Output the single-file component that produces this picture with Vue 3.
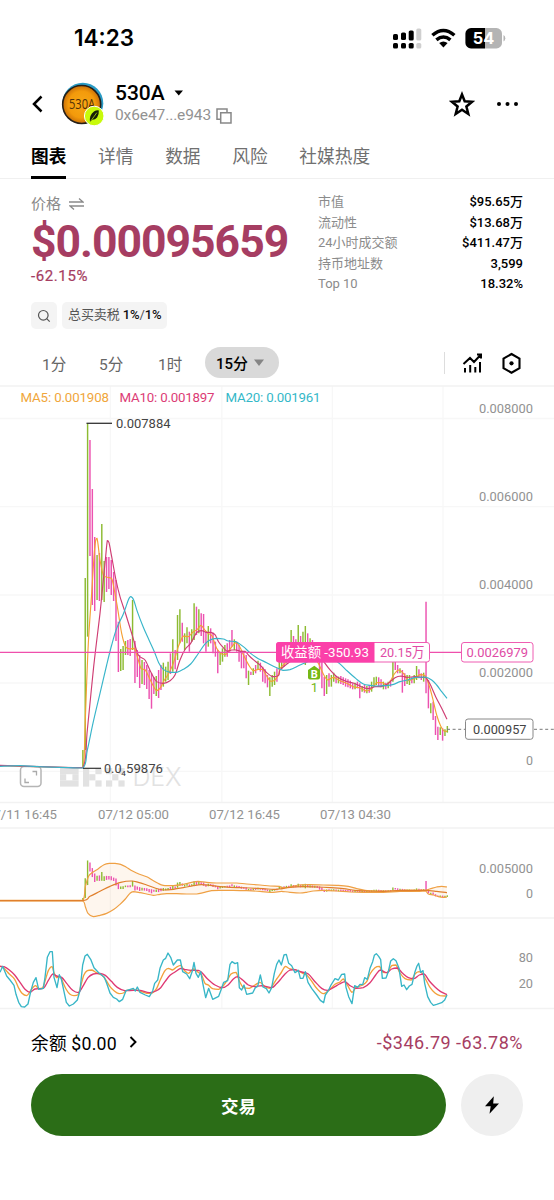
<script setup>
const tabs = ['图表', '详情', '数据', '风险', '社媒热度']
const stats = [
  ['市值', '$95.65万'],
  ['流动性', '$13.68万'],
  ['24小时成交额', '$411.47万'],
  ['持币地址数', '3,599'],
  ['Top 10', '18.32%'],
]

// Candles: high, low, direction (g = up, p = down), one every 15 minutes
const parse = (s, oy) => s.trim().split(/\s+/).map((t) => {
  const [h, l, c] = t.split(',')
  return { h: oy + h / 3, l: oy + l / 3, c }
})
const rows = [
  ...parse(`450,500,g -66,450,g -531,110,g -480,-132,p -333,15,p -189,33,p -135,0,g -141,3,p -228,0,g -117,6,g
    -129,-24,p -129,-33,p -120,-15,p -84,3,p -60,123,p 65,216,p 147,213,g 138,210,g 123,165,g 120,165,p
    117,168,p 0,150,g 123,249,p 150,231,p 165,264,p 180,252,g 186,255,p 195,267,p 210,297,p 219,326,p
    231,282,p 228,288,g 210,294,p 195,270,p 188,260,g 200,245,g 185,240,g 160,222,p 118,215,g 150,208,p
    45,180,g 28,130,g 68,125,p 100,150,g 82,130,g 95,155,p 88,125,g 10,120,g 20,105,p 28,100,g 40,108,p
    42,130,p 95,155,p 78,140,g 85,130,p 98,160,p 125,170,p 150,220,p 158,195,g 145,185,g 135,170,g
    130,170,p 120,155,p 90,140,p 118,150,g 125,155,p 135,185,p 150,205,p 160,205,p 165,235,p 212,255,g
    215,225,p 205,225,g 195,220,p 182,210,g 188,215,p 200,245,p 208,250,p 225,262,p 232,288,g 225,260,g
    215,255,g 205,245,p`, 600),
  ...parse(`190,240,g 180,235,g 170,230,p 160,220,g 160,215,p 120,200,g 138,200,p 148,200,p 105,190,g
    138,200,p 125,195,g 108,225,g 130,200,p 145,205,g 150,205,p 160,210,g 165,215,p 175,260,p 205,295,p
    260,318,p 255,312,g 250,290,p 255,290,g 248,275,g 258,280,p 260,280,g 258,282,p 262,285,p 265,290,p
    268,292,p 272,295,p 280,298,p 278,298,g 275,295,p 280,325,p 288,305,g 285,308,p 288,310,g 285,308,p
    275,305,g 262,290,g 260,285,g 262,288,p 268,292,p 275,298,g 278,298,p 275,295,g 270,290,p 205,275,g
    215,240,p 225,250,p 235,250,g 240,308,p 250,288,p 255,282,g 255,285,g 262,280,p 255,280,g 228,270,g
    238,265,p 250,270,p 248,275,g 35,310,p 270,355,p 340,370,g 335,390,p 378,435,p 410,450,p 412,435,g
    415,452,p 418,438,g 408,428,g`, 590),
]
const candles = rows.map((r, i) => ({ ...r, x: (248.6 + 7.1 * i) / 3 }))
const mini = candles.map((k) => {
  const y = (v) => 900.5 - (771 - v) * 0.115
  const h = y(k.h), l = y(k.l)
  return { x: k.x, c: k.c, h, l: k.x < 89 ? l : Math.max(h + 1.6, Math.min(l, h + 9)) }
})

// Sample points are stored at three units per pixel
const at = (s, ox, oy) => {
  const n = s.trim().split(/[\s,]+/).map(Number)
  const p = []
  for (let i = 0; i < n.length; i += 2) p.push([ox + n[i] / 3, oy + n[i + 1] / 3])
  return p
}
const f = (v) => v.toFixed(2)
const line = (p) => 'M' + p.map((q) => f(q[0]) + ' ' + f(q[1])).join('L')
// Control points stay inside each segment's box, so steep moves never overshoot
const within = (v, a, b) => f(Math.max(Math.min(a, b), Math.min(Math.max(a, b), v)))
const curve = (p) => {
  let d = `M${f(p[0][0])} ${f(p[0][1])}`
  for (let i = 0; i < p.length - 1; i++) {
    const a = p[i - 1] || p[i], b = p[i], c = p[i + 1], e = p[i + 2] || c
    const c1 = [0, 1].map((j) => within(b[j] + (c[j] - a[j]) / 6, b[j], c[j]))
    const c2 = [0, 1].map((j) => within(c[j] - (e[j] - b[j]) / 6, b[j], c[j]))
    d += `C${c1.join(' ')} ${c2.join(' ')} ${f(c[0])} ${f(c[1])}`
  }
  return d
}

const ma5 = curve([
  ...at('0,497 60,499 246,503 252,480 257,330 265,130 275,-20 284,-155 291,-185 300,-120 310,-75 322,-68 335,-64 342,-35 352,20 365,100 377,140 390,147 403,145 412,170 423,205 436,210 447,232 458,254 470,272 482,262 492,242 505,222 520,190 535,140 550,108 565,110 578,97 592,88 603,76 613,88 624,100 636,108 650,145 665,162 678,163 692,145 708,128 720,142 733,170 748,198 760,212 775,208 788,208 800,228 812,244 825,240 836,222', 0, 600),
  ...at('30,235 45,220 70,190 100,185 130,200 146,222 160,252 173,270 190,262 210,272 230,280 250,290 270,294 290,303 305,296 320,278 337,278 350,285 360,275 373,252 386,240 400,250 415,272 435,265 450,254 466,258 477,285 488,325 500,375 512,408 522,423 531,424', 270, 590),
])
const ma10 = curve([
  ...at('0,496 90,499 248,503 262,390 281,200 300,40 308,-40 316,-120 322,-178 327,-172 335,-130 348,-60 360,-10 378,45 398,110 415,165 435,180 452,215 470,245 490,250 510,242 525,225 540,180 556,147 572,130 590,98 605,92 618,97 632,97 645,104 656,126 670,143 682,154 695,150 708,150 722,154 735,154 748,168 765,183 782,197 800,218 818,230 836,226', 0, 600),
  ...at('30,240 60,215 90,195 120,185 145,190 165,220 182,242 203,262 228,274 252,280 274,290 295,296 315,290 333,290 352,282 375,263 393,258 412,262 435,260 452,262 466,262 480,282 497,320 515,355 531,388', 270, 590),
])
const ma20 = curve([
  ...at('0,499 60,497 110,500 180,502 248,504 262,450 280,365 300,280 320,195 335,135 350,85 370,42 385,0 392,-10 401,0 412,35 430,82 447,120 463,155 476,188 490,208 510,217 530,217 550,208 572,192 594,162 614,133 630,120 650,115 670,117 685,123 708,125 730,140 752,160 775,176 800,188 820,199 838,206', 0, 600),
  ...at('40,241 60,239 90,225 120,212 155,200 185,205 208,220 232,243 258,266 280,282 300,286 320,288 345,287 368,284 390,275 413,270 437,262 466,261 485,270 500,285 515,305 531,325', 270, 590),
])

const bollTop = [
  ...at('0,226 248,226 256,185 266,153 278,142 295,131 312,119 328,115 345,115 362,118 378,126 393,136 410,144 425,150 442,156 458,166 474,175 490,181 520,182 550,178 572,173 594,169 620,172 650,174 680,174 710,174 740,177 780,180 810,183 838,184', 0, 825),
  ...at('35,188 60,186 85,180 120,179 160,180 205,181 235,184 260,191 285,196 320,198 360,198 400,195 440,195 466,196 485,190 500,186 515,184 531,186', 270, 825),
]
const bollMid = curve([
  ...at('0,227 248,227 270,214 300,199 330,184 362,172 394,168 415,172 440,180 465,189 490,195 520,193 550,188 580,182 605,179 630,181 660,185 690,187 720,188 750,189 790,191 820,193 838,192', 0, 825),
  ...at('38,191 60,187 100,185 140,186 180,188 220,191 255,196 290,198 340,199 380,197 420,197 466,196 500,199 531,203', 270, 825),
])
const bollLow = [
  ...at('0,228 248,228 256,245 264,265 280,275 300,271 320,265 342,253 360,238 376,222 390,205 400,200 420,203 440,207 460,211 480,208 500,206 530,206 560,207 590,207 610,203 635,197 665,196 700,196 740,197 780,199 810,202 838,200', 0, 825),
  ...at('35,199 60,202 90,204 110,202 130,198 160,196 200,198 240,201 280,202 340,202 390,199 440,199 466,198 475,207 490,210 505,215 520,217 531,216', 270, 825),
]
const bollBand = curve(bollTop) + curve([...bollLow].reverse()).replace('M', 'L') + 'Z'

const kLine = curve([
  ...at('0,423 12,430 28,447 44,463 55,487 66,505 80,512 90,500 98,488 107,482 116,491 128,488 136,465 145,437 156,425 162,443 170,458 180,455 188,470 198,492 210,508 222,512 235,508 243,480 252,449 262,437 276,435 288,443 305,450 317,464 330,485 343,498 357,506 370,504 380,496 400,495 420,498 440,505 457,504 470,490 482,462 495,437 505,430 518,435 530,426 542,421 552,435 565,445 580,432 595,442 605,450 615,475 625,480 638,491 656,493 670,482 682,465 693,447 708,442 718,468 730,488 748,490 765,480 780,472 795,485 810,490 820,478 830,462', 0, 825),
  ...at('33,444 46,424 58,431 72,433 85,438 100,446 110,450 124,467 140,490 160,506 180,493 195,478 210,471 220,462 232,480 246,502 258,488 278,480 290,470 300,447 315,428 328,424 339,442 352,443 365,422 378,420 390,444 405,461 424,465 435,447 447,440 457,445 468,465 480,487 495,504 510,512 531,513', 270, 825),
])
const dLine = curve([
  ...at('0,424 12,425 28,435 44,450 60,472 75,493 90,502 105,492 130,490 145,466 158,447 170,453 185,457 200,475 218,496 235,503 248,485 264,458 280,447 300,445 316,451 334,469 352,487 374,497 400,496 420,496 448,503 468,498 482,488 495,470 510,451 525,441 542,430 558,434 575,436 595,436 606,443 622,461 645,480 668,488 685,479 700,462 713,455 728,465 745,480 765,485 785,482 815,488 828,478', 0, 825),
  ...at('30,465 45,447 60,435 75,434 95,441 115,447 135,470 155,490 172,496 190,488 208,477 225,470 240,482 258,490 280,488 300,473 317,450 331,435 350,443 365,432 382,429 398,445 415,458 432,461 448,450 463,447 478,468 495,486 512,500 531,509', 270, 825),
])
const jLine = line([
  ...at('0,442 8,424 20,453 30,465 42,481 48,508 56,532 64,545 74,546 84,537 92,500 100,472 108,458 116,493 130,490 135,457 142,397 150,380 157,380 162,457 171,488 178,449 184,462 192,500 199,532 208,543 220,537 232,525 240,497 248,420 255,393 262,388 272,403 282,428 296,443 313,457 320,475 330,504 340,517 350,522 358,530 368,523 378,497 391,493 400,490 406,498 412,486 420,502 436,510 448,515 458,498 464,475 473,465 480,430 490,405 497,400 504,384 512,397 520,420 532,405 541,405 548,440 560,447 569,461 577,438 582,412 588,445 595,457 602,440 609,478 617,518 626,490 638,523 656,514 663,495 671,472 683,467 690,418 696,410 705,416 713,413 718,488 725,495 732,480 740,508 758,504 766,488 773,484 781,450 789,486 799,491 807,504 815,488 823,445 830,418 837,405', 0, 825),
  ...at('34,420 42,390 49,388 56,415 65,422 75,443 85,436 91,460 99,460 106,440 114,472 125,490 140,510 151,526 161,533 166,510 175,497 183,480 195,461 205,465 215,448 224,447 228,487 236,515 246,536 254,482 263,487 270,478 278,479 284,458 292,463 300,430 308,410 313,391 319,386 326,394 332,404 337,460 348,459 355,440 362,408 370,401 378,407 387,430 395,484 402,480 410,494 418,483 426,478 435,440 441,423 446,415 452,442 459,437 464,475 473,515 482,532 490,541 500,538 515,533 524,525 531,510', 270, 825),
])

const axis = [
  [413, '0.008000', 54], [501, '0.006000', 54], [589, '0.004000', 54], [677.4, '0.002000', 54],
  [765.4, '0', 7], [873, '0.005000', 54], [898.4, '0', 7], [962, '80', 14.3], [987.5, '20', 14.3],
]
const dates = [[-14, '07/11 16:45'], [98, '07/12 05:00'], [209, '07/12 16:45'], [320, '07/13 04:30']]
const blocks = [
  [60, 768, 18.6, 6.2], [60, 780.4, 18.6, 6.2], [60, 774.2, 6.2, 6.2], [72.4, 774.2, 6.2, 6.2],
  [83, 768, 6.2, 18.6], [89.2, 774.2, 6.2, 6.2], [95.4, 768, 6.2, 6.2], [95.4, 780.4, 6.2, 6.2],
  [106, 768, 6.2, 6.2], [118.4, 768, 6.2, 6.2], [112.2, 774.2, 6.2, 6.2], [106, 780.4, 6.2, 6.2], [118.4, 780.4, 6.2, 6.2],
]
</script>

<template>
  <main class="screen">
    <div class="status">
      <span class="clock">14:23</span>
      <svg class="status-icons" width="116" height="24" viewBox="391 26 116 24">
        <g fill="#000">
          <rect x="393" y="35" width="5" height="6" rx="1.6" /><rect x="401" y="33.5" width="5" height="7.5" rx="1.6" /><rect x="408.7" y="31.5" width="5" height="10" rx="1.6" />
          <rect x="393" y="44" width="5" height="5.5" rx="1.6" /><rect x="401" y="44" width="5" height="5.5" rx="1.6" /><rect x="408.7" y="44" width="5" height="5.5" rx="1.6" />
        </g>
        <g fill="#cfcfcf"><rect x="416.3" y="29.5" width="5" height="12" rx="1.6" /><rect x="416.3" y="44" width="5" height="5.5" rx="1.6" /></g>
        <g fill="none" stroke="#000" stroke-width="3.5"><path d="M432.4 36.3q11-9.6 22 0" /><path d="M436.4 40.9q7-5.9 14 0" /></g>
        <path d="M439.2 44.1q4.2-3.2 8.4 0l-4.2 4.3z" />
        <path d="M471 29h14v20.5h-14a5.6 5.6 0 0 1-5.6-5.6v-9.3a5.6 5.6 0 0 1 5.6-5.6z" />
        <path d="M485 29h11.400a5.600 5.600 0 0 1 5.600 5.600v9.300a5.600 5.600 0 0 1-5.600 5.600h-11.400z" fill="#b4b4b4" />
        <path d="M503.500 36q1.800.8 1.800 3.200t-1.800 3.200z" fill="#b4b4b4" />
        <text x="472.700" y="45" class="battery" textLength="21.500" lengthAdjust="spacingAndGlyphs">54</text>
      </svg>
    </div>

    <header class="header">
      <svg class="back" width="13" height="20" viewBox="0 0 13 20"><path d="M10.500 2.500 3 10l7.500 7.500" fill="none" stroke="#000" stroke-width="2.500" /></svg>
      <svg class="avatar" width="44" height="44" viewBox="61 82 44 44">
        <defs><radialGradient id="coin"><stop offset="0" stop-color="#f7a817" /><stop offset=".7" stop-color="#f39a0b" /><stop offset="1" stop-color="#ca7009" /></radialGradient></defs>
        <circle cx="82.800" cy="103.300" r="20.500" fill="#299bc5" />
        <circle cx="81.700" cy="104.500" r="19" fill="url(#coin)" stroke="#261f18" stroke-width="1.600" />
        <text x="69" y="108.800" class="coin-text" textLength="26" lengthAdjust="spacingAndGlyphs">530A</text>
        <circle cx="94.200" cy="116" r="9.800" fill="#c8fa0a" stroke="#fff" stroke-width="1" />
        <path d="M90 122q-1-7 4-10.500 2-1.300 4.800-1.100.4 3.500-1.700 7.100-2 2.200-4.500 2.200z" fill="#171e08" />
        <path d="m90.300 121.700 6.500-9" stroke="#c8fa0a" stroke-width=".7" />
      </svg>
      <div class="identity">
        <div class="name"><span>530A</span><svg width="10" height="6"><path d="M.5.500h8.500L4.750 5.500z" /></svg></div>
        <div class="address"><span>0x6e47...e943</span>
          <svg width="16" height="16" viewBox="0 0 16 16" fill="none" stroke="#888" stroke-width="1.500"><path d="M4.500 11.200H1V1h10v3.300M4.700 4.700H15V15H4.700z" /></svg>
        </div>
      </div>
      <svg class="star" width="26" height="27" viewBox="0 0 26 27"><path d="m13 3.500 2.700 6.800 7.300.500-5.600 4.700 1.900 7.500-6.300-4.200L6.700 23l1.900-7.500L3 10.800l7.300-.5z" fill="none" stroke="#000" stroke-width="2.500" /></svg>
      <svg class="more" width="24" height="6"><circle cx="3" cy="3" r="2" /><circle cx="11.500" cy="3" r="2" /><circle cx="20" cy="3" r="2" /></svg>
    </header>

    <nav class="tabs"><span v-for="(t, i) in tabs" :key="t" :class="{ active: i === 0 }">{{ t }}</span></nav>

    <section class="summary">
      <div class="price-side">
        <div class="price-label">价格
          <svg width="15" height="12" viewBox="0 0 15 12" fill="none" stroke="#8a8a8a" stroke-width="1.300"><path d="M0 4h14L10 .5M15 8H1l4 3.500" /></svg>
        </div>
        <div class="price">$0.00095659</div>
        <div class="change">-62.15%</div>
        <div class="chips">
          <span class="chip search"><svg width="14" height="14" viewBox="0 0 14 14" fill="none" stroke="#555" stroke-width="1.200"><circle cx="6.300" cy="6.300" r="4.800" /><path d="m9.700 9.700 3 3" /></svg></span>
          <span class="chip tax">总买卖税 <b>1%</b>/<b>1%</b></span>
        </div>
      </div>
      <dl class="stats"><div v-for="s in stats" :key="s[0]"><dt>{{ s[0] }}</dt><dd>{{ s[1] }}</dd></div></dl>
    </section>

    <div class="periods">
      <span class="p1">1分</span><span class="p2">5分</span><span class="p3">1时</span>
      <span class="period-on">15分<svg width="11" height="8"><path d="M0 .5h10L5 7z" fill="#858585" /></svg></span>
      <i class="divider"></i>
      <svg class="tool" width="20" height="22" viewBox="463 353 20 22" fill="none" stroke="#000" stroke-width="2"><path d="m464.500 365 6.500-6 4 4 6.500-7M478 355.500h4v4M466 369v4.500M471.200 366v7.500M476.300 368v5.500M481 363v10.500" /></svg>
      <svg class="tool hex" width="20" height="22" viewBox="501 353 20 22"><path d="m511.500 355 8 4.600v9.500l-8 4.600-8-4.600v-9.500z" fill="none" stroke="#000" stroke-width="2.100" /><circle cx="511.500" cy="364.300" r="2.100" /></svg>
    </div>

    <svg class="chart" width="554" height="625" viewBox="0 385 554 625">
      <g fill="none" stroke="#f7f7f7" stroke-width="1.300">
        <path d="M0 418.500H554M0 506.700H554M0 595H554M0 683H554M0 771.300H554" />
        <path d="M110.400 386V802M221.800 386V802M332.400 386V802M443 386V802M110.400 828V1008M221.800 828V1008M332.400 828V1008M443 828V1008" />
      </g>
      <path d="M0 386H554M0 802.500H554M0 828H554M0 918H554M0 1008.500H554" stroke="#f2f2f2" stroke-width="1.400" />

      <g fill="#e2e2e2"><rect v-for="(b, i) in blocks" :key="i" :x="b[0]" :y="b[1]" :width="b[2]" :height="b[3]" /></g>
      <text x="132.500" y="785.500" class="dex" textLength="49">DEX</text>
      <rect x="20.500" y="766.500" width="20.500" height="20" rx="3.500" fill="#fff" stroke="#b5b5b5" stroke-width="1.500" />
      <path d="M32.500 771.500h4v4M25 778.500v4h4" fill="none" stroke="#aaa" stroke-width="1.300" />

      <path v-for="(k, i) in candles" :key="i" :d="`M${k.x} ${k.h}V${k.l}`" :class="k.c" />
      <g fill="none" stroke-width="1.150">
        <path :d="ma5" stroke="#f5a034" /><path :d="ma10" stroke="#cf3d73" /><path :d="ma20" stroke="#38b5ca" />
      </g>

      <path d="M0 652.300H461" stroke="#ef4fac" stroke-width="1.300" />
      <path d="M447 729.300H466M534 729.300H554" stroke="#777" stroke-dasharray="3 2.600" />
      <path d="M86.500 423.300H112" stroke="#333" stroke-width="1.300" /><path d="M83 768.300H101" stroke="#333" stroke-width="1.200" />

      <g class="ma-labels">
        <text x="20.500" y="402" textLength="88.500" fill="#f0a63b">MA5: 0.001908</text>
        <text x="119.500" y="402" textLength="95" fill="#dc3c76">MA10: 0.001897</text>
        <text x="225.500" y="402" textLength="95" fill="#34b8c8">MA20: 0.001961</text>
      </g>
      <text x="116" y="428" class="mark" textLength="54.500" lengthAdjust="spacingAndGlyphs">0.007884</text>
      <text x="104" y="773" class="mark" textLength="17.500" lengthAdjust="spacingAndGlyphs">0.0</text><text x="121.300" y="775.500" class="sub">4</text>
      <text x="126" y="773" class="mark" textLength="37" lengthAdjust="spacingAndGlyphs">59876</text>

      <g class="axis">
        <text v-for="a in axis" :key="a[0]" :x="533 - a[2]" :y="a[0]" :textLength="a[2]" lengthAdjust="spacingAndGlyphs">{{ a[1] }}</text>
        <text v-for="d in dates" :key="d[1] + d[0]" :x="d[0]" y="818.800" textLength="71" lengthAdjust="spacingAndGlyphs">{{ d[1] }}</text>
      </g>

      <rect x="276.500" y="642.500" width="153" height="19.500" rx="2.500" fill="#fff" stroke="#ef5db2" />
      <path d="M279 642h95.500v20.500H279a3 3 0 0 1-3-3v-14.500a3 3 0 0 1 3-3z" fill="#fb40a9" />
      <text x="281" y="657" class="tag white" textLength="88" lengthAdjust="spacingAndGlyphs">收益额 -350.93</text>
      <text x="380" y="657" class="tag pink" textLength="44.500" lengthAdjust="spacingAndGlyphs">20.15万</text>
      <rect x="461.500" y="642.500" width="71.500" height="19.500" rx="2.500" fill="#fff" stroke="#ef5db2" />
      <text x="466.500" y="657" class="tag pink" textLength="61.500" lengthAdjust="spacingAndGlyphs">0.0026979</text>
      <rect x="465.500" y="719" width="67.500" height="20.300" rx="2.500" fill="#fff" stroke="#888" />
      <text x="473" y="734" class="mark" textLength="53.500" lengthAdjust="spacingAndGlyphs">0.000957</text>
      <path d="m314.300 665.800 5.700 4.200v7.500a2 2 0 0 1-2 2h-8a2 2 0 0 1-2-2V670z" fill="#76b816" />
      <text x="310.700" y="677.500" class="buy">B</text><text x="310.800" y="691.800" class="count">1</text>

      <path :d="bollBand" fill="#f28c28" fill-opacity=".08" />
      <path v-for="(k, i) in mini" :key="'m' + i" :d="`M${k.x} ${k.h}V${k.l}`" :class="['mini', k.c]" />
      <g fill="none" stroke="#efa044" stroke-width="1.200"><path :d="curve(bollTop)" /><path :d="curve(bollLow)" /><path :d="bollMid" stroke="#e07f2c" /></g>
      <g fill="none" stroke-width="1.350" stroke-linejoin="round"><path :d="kLine" stroke="#f3a03b" /><path :d="dLine" stroke="#df3973" /><path :d="jLine" stroke="#38b6c7" /></g>
    </svg>

    <div class="balance">
      <span class="funds">余额 $0.00</span>
      <svg width="9" height="12" viewBox="0 0 9 12"><path d="m1.500 1 5 5-5 5" fill="none" stroke="#000" stroke-width="1.900" /></svg>
      <span class="pnl">-$346.79 -63.78%</span>
    </div>
    <div class="actions">
      <button class="trade">交易</button>
      <button class="flash"><svg width="16" height="18" viewBox="0 0 16 18"><path d="M9.800.2 1 10.300h5.700L5.500 17.800 15 7.500H9.200z" /></svg></button>
    </div>
  </main>
</template>

<style>
body { background: #fff; }
</style>

<style scoped>
* { box-sizing: border-box; }
.screen { width: 554px; height: 1200px; overflow: hidden; background: #fff; color: #000; font-family: Roboto, "Noto Sans CJK SC", sans-serif; }
svg { display: block; flex: none; }
.status { height: 75px; display: flex; justify-content: space-between; align-items: flex-start; padding: 25px 47px 0 74px; }
.clock { font: 600 22.500px/25px Inter, sans-serif; letter-spacing: 0; }
.battery { font: 700 16.500px Inter, sans-serif; fill: #fff; }
.header { height: 58px; display: flex; align-items: center; padding: 0 34px 0 31px; }
.avatar { margin-left: 17px; }
.identity { margin-left: 10px; margin-top: -1px; flex: 1; }
.name { display: flex; align-items: center; gap: 9px; font-weight: 500; font-size: 21px; line-height: 24px; }
.address { display: flex; align-items: center; gap: 5px; color: #929292; font-size: 15.500px; line-height: 21px; }
.address span { width: 96px; white-space: nowrap; letter-spacing: -.1px; }
.coin-text { font: 14.500px "Open Sans", sans-serif; fill: #513008; }
.star { margin-right: 21px; }
.tabs { height: 46px; display: flex; gap: 31.700px; padding-left: 31px; border-bottom: 1px solid #f0f0f0; font-size: 17.700px; font-weight: 400; line-height: 48px; color: #707070; }
.tabs span { height: 46px; }
.tabs .active { color: #000; font-weight: 700; border-bottom: 3px solid #000; }
.summary { height: 161px; padding: 12px 31px 0; display: flex; justify-content: space-between; }
.price-side { width: 270px; }
.price-label { display: flex; align-items: center; gap: 8px; font-size: 15px; line-height: 26px; color: #8a8a8a; }
.price { color: #a63d62; font-size: 44.500px; line-height: 50px; height: 51px; font-weight: 700; letter-spacing: -1px; }
.change { color: #a63d62; font-size: 15px; line-height: 20px; font-weight: 400; letter-spacing: .6px; margin-top: -2px; -webkit-text-stroke: .2px #a63d62; }
.chips { display: flex; gap: 5px; margin-top: 16px; }
.chip { height: 27px; border-radius: 5px; background: #f4f4f4; display: block; }
.search { width: 26px; padding: 7px 6px; }
.tax { width: 105px; padding-left: 6px; font-size: 13px; line-height: 26px; white-space: pre; color: #555; letter-spacing: -.1px; }
.tax b { color: #111; font-weight: 500; }
.stats { margin: 1px 0 0; width: 205px; font-size: 13px; line-height: 20.600px; }
.stats div { display: flex; justify-content: space-between; height: 20.600px; }
.stats dt { color: #8b8b8b; }
.stats dd { margin: 0; font-weight: 500; }
.periods { height: 45px; padding: 0 31px; display: flex; align-items: center; color: #666; font-size: 15.500px; }
.p1 { margin-left: 11px; width: 57px; }
.p2 { width: 59px; }
.p3 { width: 47px; }
.period-on { display: flex; align-items: center; gap: 6px; width: 74px; height: 31px; border-radius: 16px; background: #d9d9d9; color: #000; padding-left: 11px; font-weight: 500; font-size: 15px; white-space: nowrap; }
.divider { width: 1px; height: 22px; background: #ddd; margin-left: 165px; }
.tool { margin-left: 17px; }
.hex { margin-left: 19px; }
.g { stroke: #8dbb32; stroke-width: 1.450; }
.p { stroke: #ec52b0; stroke-width: 1.450; }
.mini { stroke-width: 1.400; }
.ma-labels { font-size: 13.300px; }
.axis { font-size: 13.700px; fill: #929292; }
.mark { font-size: 13.700px; fill: #444; }
.sub { font-size: 8px; fill: #333; }
.tag { font-size: 13.500px; }
.white { fill: #fff; }
.pink { fill: #e04ba5; }
.dex { font: 300 25px Inter, Roboto, sans-serif; fill: #e2e2e2; }
.buy { font-size: 11px; font-weight: 700; fill: #fff; }
.count { font-size: 13px; fill: #76b816; }
.balance { height: 64px; display: flex; align-items: center; padding: 0 31px; font-size: 18px; }
.funds { font-size: 17.700px; letter-spacing: .2px; margin-right: 12px; }
.pnl { margin-left: auto; color: #a63d62; letter-spacing: .5px; }
.actions { display: flex; justify-content: space-between; padding: 0 31px; }
button { border: 0; padding: 0; font-family: inherit; }
.trade { width: 415px; height: 62px; border-radius: 31px; background: #2b6d17; color: #fff; font-size: 17.500px; font-weight: 700; }
.flash { width: 62px; height: 62px; border-radius: 50%; background: #efefef; display: flex; align-items: center; justify-content: center; }
</style>
